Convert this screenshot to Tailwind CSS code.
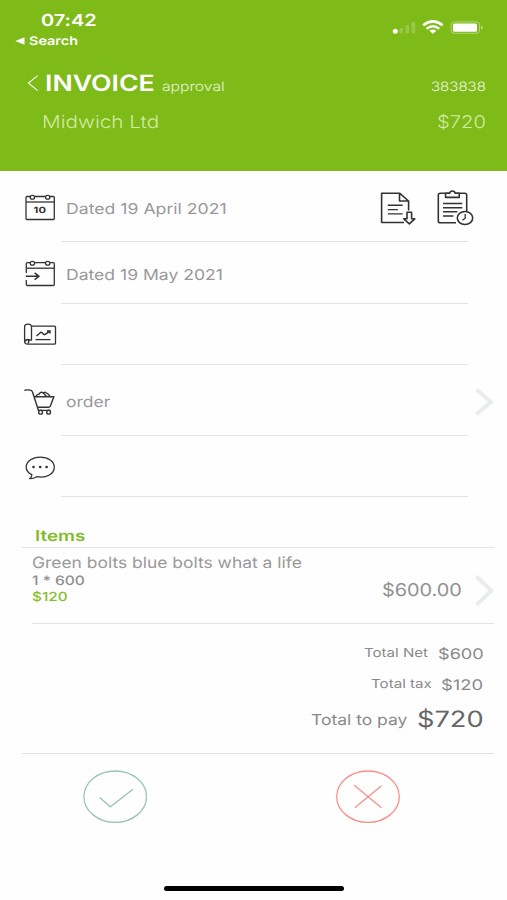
<!DOCTYPE html>
<html lang="en">
<head>
<meta charset="utf-8">
<meta name="viewport" content="width=device-width, initial-scale=1">
<title>Invoice approval</title>
<script src="https://cdn.jsdelivr.net/npm/@tailwindcss/browser@4"></script>
</head>
<body class="bg-white font-['Inter',sans-serif] whitespace-nowrap [text-rendering:geometricPrecision] [font-feature-settings:'calt'_0]">
<div class="w-[507px] h-[900px] flex flex-col overflow-hidden bg-[#fefefe]">

  <!-- Status bar and title -->
  <header class="h-[171px] shrink-0 bg-[#7eba18] text-white">
    <div class="flex h-[52px] justify-between pt-[10px]">
      <div class="flex flex-col">
        <div class="pl-[41px] h-5 leading-5 text-[16.5px] font-semibold"><span class="block w-[46px] origin-left scale-x-[1.21]">07:42</span></div>
        <div class="flex items-center pl-[15px] h-[22px] leading-[22px] text-[12px] font-semibold">
          <svg class="w-[10px] h-[8px] mr-[4px]" viewBox="0 0 10 8"><path d="M.3 4 9.5.2v7.6z" fill="#fff"/></svg>
          <span class="block w-[41px] origin-left scale-x-[1.203]">Search</span>
        </div>
      </div>
      <svg class="w-[95px] h-[20px] mt-[7px] mr-[22px]" viewBox="390 17 95 20" fill="none">
        <circle cx="395.3" cy="31.3" r="2.5" fill="#fff"/>
        <g fill="#fff" fill-opacity=".22"><rect x="399.5" y="28" width="3.6" height="5.6" rx="1"/><rect x="405.5" y="25" width="3.6" height="8.6" rx="1"/><rect x="411.6" y="22" width="3.6" height="11.6" rx="1"/></g>
        <g stroke="#fff" stroke-width="2.5"><path d="M423.2 25.2Q432.9 17.6 442.6 25.2"/><path d="M426.6 28.8Q432.9 23.8 439.2 28.8"/></g>
        <path d="M429.4 30.8Q432.9 28.4 436.4 30.8L432.9 33.8Z" fill="#fff"/>
        <rect x="451.2" y="21.9" width="28.3" height="11.4" rx="3" stroke="#fff" stroke-opacity=".4"/>
        <rect x="453" y="23.5" width="24" height="8.2" rx="1.5" fill="#fff"/>
        <path d="M481 25.8q2 .4 2 1.8t-2 1.8z" fill="#fff" fill-opacity=".45"/>
      </svg>
    </div>
    <div class="flex h-[63px] items-center pl-[27px] pt-[1px]">
      <svg class="w-[12px] h-[16px] mr-[5.8px] mb-[2px]" viewBox="27 74 12 16" fill="none"><path d="M37.7 74.6 28.4 82 37.7 89.6" stroke="#fff" stroke-opacity=".9" stroke-width="1.2"/></svg>
      <h1 class="w-[117.2px] text-[22.5px] font-semibold leading-8"><span class="block w-[93px] origin-left scale-x-[1.185]">INVOICE</span></h1>
      <div class="w-[268.6px] pt-[6px] text-[13px] font-light leading-5 text-white/80"><span class="block w-[52px] origin-left scale-x-[1.205]">approval</span></div>
      <div class="pt-[6px] text-[13px] font-light leading-5 text-white/85"><span class="block w-[48px] origin-left scale-x-[1.155]">383838</span></div>
    </div>
    <div class="flex h-[15px] items-center pl-[41.8px] text-[17.5px] font-light leading-6 text-[#d2eaa4]">
      <div class="w-[395.6px]"><span class="block w-[99px] origin-left scale-x-[1.185]">Midwich Ltd</span></div>
      <div><span class="block w-[43px] origin-left scale-x-[1.155]">$720</span></div>
    </div>
  </header>

  <!-- Invoice details -->
  <section class="w-[468px] shrink-0 text-[15px] leading-6 text-[#999]">
    <div class="flex h-[71px]">
      <div class="w-[61px] pl-[22px] pt-[21px]">
        <svg class="w-[36px] h-[30px]" viewBox="22 192 36 30" fill="none" stroke="#333" stroke-width="1.3">
          <rect x="26" y="196.5" width="28.3" height="23" rx="1"/><path d="M26 202h28.3"/>
          <g fill="#fff"><ellipse cx="32.4" cy="197.3" rx="2.2" ry="1.9"/><ellipse cx="47.7" cy="197.3" rx="2.2" ry="1.9"/></g>
          <text x="33.6" y="213.2" transform="translate(33.6 0) scale(1.312 1) translate(-33.6 0)" font-family="Inter" font-size="8.5" font-weight="700" fill="#333" stroke="none">10</text>
        </svg>
      </div>
      <div class="flex grow justify-between border-b border-[#e3e3e3] pl-[4.5px]">
        <div class="pt-[25.5px]"><span class="block w-[137px] origin-left scale-x-[1.177]">Dated 19 April 2021</span></div>
        <svg class="w-[96px] h-[38px] mt-[18px] -mr-[6px]" viewBox="378 189 96 38" fill="none" stroke="#333" stroke-width="1.6" stroke-linejoin="round">
          <path d="M404 222.5H381.6V193.2H399.5L408.6 201V210.5M399.5 193.2V201H408.6"/>
          <path d="M387.8 205.3H402.6M387.8 209.6H397.8M387.8 213.9H402.6" stroke-width="1.4"/>
          <path d="M407 212.2h4.6v6.6h3.2l-5.5 5-5.5-5h3.2z" fill="#fff"/>
          <path d="M456 222.8H440.3Q438.3 222.8 438.3 221V195Q438.3 193.3 440.3 193.3H464.7Q466.7 193.3 466.7 195V211"/>
          <path d="M445.6 193.3V197.4H459.2V193.3H455.2Q454.8 191 452.4 191T449.6 193.3Z" fill="#fff"/>
          <path d="M443 203.5H462.3M443 207.7H462.3M443 211.8H457.3M443 216H453.5" stroke-width="1.4"/>
          <ellipse cx="465" cy="218" rx="7.7" ry="6.5" fill="#fff"/><path d="M465.2 214v4.2l-2.8 2" stroke-width="1.3"/>
        </svg>
      </div>
    </div>

    <div class="flex h-[62px]">
      <div class="w-[61px] pl-[22px] pt-[16px]">
        <svg class="w-[36px] h-[30px]" viewBox="22 258 36 30" fill="none" stroke="#333" stroke-width="1.3">
          <path d="M26.3 273V263.5Q26.3 262.6 27.5 262.6H53.3Q54.3 262.6 54.3 263.5V284.6Q54.3 285.5 53.3 285.5H27.5Q26.3 285.5 26.3 284.6V280"/><path d="M26.3 268.2H54.3"/>
          <g fill="#fff"><ellipse cx="32.4" cy="263.3" rx="2.2" ry="1.9"/><ellipse cx="47.7" cy="263.3" rx="2.2" ry="1.9"/></g>
          <path d="M25.8 276.3H38.8M34.6 272.9 38.9 276.3 34.6 279.7" stroke-width="1.5"/>
        </svg>
      </div>
      <div class="grow border-b border-[#e3e3e3] pl-[4.5px] pt-[20.5px]"><span class="block w-[134px] origin-left scale-x-[1.17]">Dated 19 May 2021</span></div>
    </div>

    <div class="flex h-[61px]">
      <div class="w-[61px] pl-[22px] pt-[16px]">
        <svg class="w-[36px] h-[28px]" viewBox="22 320 36 28" fill="none" stroke="#333" stroke-width="1.3">
          <path d="M31.5 326.2H54.4Q55.5 326.2 55.5 327.2V343Q55.5 344.2 54.4 344.2H28Q24.6 344.2 24.6 341V327Q24.6 324.2 28 324.2T31.5 327V340.5"/>
          <path d="M24.8 341.5Q25.4 339.5 28 339.5L31.5 340.3M28 339.5Q29.8 341.8 27.7 343.6"/>
          <path d="M36.5 336 40.5 332.5Q41.3 332 42 332.7L43.6 334.3Q44.4 335 45.2 334.3L49.5 331.3M47 331H50V333.4" stroke-width="1.5"/><path d="M35.5 339.6H50.5"/>
        </svg>
      </div>
      <div class="grow border-b border-[#e3e3e3]"></div>
    </div>

    <div class="flex h-[71px]">
      <div class="w-[61px] shrink-0 pl-[22px] pt-[21px]">
        <svg class="w-[36px] h-[32px]" viewBox="22 386 36 32" fill="none" stroke="#333" stroke-width="1.4" stroke-linejoin="round">
          <path d="M24.5 390.8Q25 389.8 27 389.9L30.4 390.1Q32 390.3 32.5 392L38.5 410.5M34 396.8H53.9L50.3 406.2Q49.9 407.2 48.6 407.2H37.5M38.3 410.4H50.5"/>
          <path d="M36 396.4Q37.2 393.8 39.2 394.2Q40.6 391.6 42.8 392.6L46.6 396.4M42.8 393.6Q44.6 391.6 46.2 392.8Q48.6 393.6 50 396.4" stroke-width="1.4"/>
          <g fill="#fff"><circle cx="40.6" cy="412.2" r="1.9"/><circle cx="48.6" cy="412.2" r="1.9"/></g>
        </svg>
      </div>
      <div class="flex w-[407px] shrink-0 border-b border-[#e3e3e3] pl-[4.7px]">
        <div class="w-[407px] shrink-0 pt-[25px]"><span class="block w-[38px] origin-left scale-x-[1.165]">order</span></div>
        <svg class="w-[22px] h-[32px] mt-[21px] shrink-0" viewBox="472 386 22 32" fill="none"><path d="M475.5 389.7 490 402 475.5 414.3" stroke="#e8ecec" stroke-width="4"/></svg>
      </div>
    </div>

    <div class="flex h-[61px]">
      <div class="w-[61px] pl-[22px] pt-[17px]">
        <svg class="w-[36px] h-[30px]" viewBox="22 453 36 30" fill="none" stroke="#333" stroke-width="1.3">
          <path d="M31.8 474.7Q32 477.2 29.6 478.7Q34 478.8 36.6 476.7C47 478.6 54.3 473.6 54.3 467C54.3 461.3 48.2 457.1 40.2 457.1S26.2 461.3 26.2 467Q26.2 471.9 31.8 474.7Z" stroke-linejoin="round"/>
          <g fill="#333" stroke="none"><circle cx="33.5" cy="467" r="1.35"/><circle cx="40.2" cy="467" r="1.35"/><circle cx="46.6" cy="467" r="1.35"/></g>
        </svg>
      </div>
      <div class="grow border-b border-[#e3e3e3]"></div>
    </div>
  </section>

  <!-- Line items -->
  <section class="ml-[22px] w-[472px] shrink-0">
    <h2 class="h-[51px] border-b border-[#e3e3e3] pl-[12.6px] pt-[28.5px] text-[15px] font-semibold leading-5 text-[#82bb2a]"><span class="block w-[41px] origin-left scale-x-[1.255]">Items</span></h2>
    <div class="ml-[10px] flex h-[76px] border-b border-[#e3e3e3]">
      <div class="w-[349.5px] pt-[5px]">
        <div class="h-5 leading-5 text-[15.5px] text-[#999]"><span class="-ml-[.5px] block w-[240px] origin-left scale-x-[1.125]">Green bolts blue bolts what a life</span></div>
        <div class="h-[15px] leading-[17px] text-[13px] font-medium text-[#8f8f8f]"><span class="block w-[45px] origin-left scale-x-[1.2]">1 * 600</span></div>
        <div class="h-[19px] leading-[20px] text-[12.5px] font-medium text-[#86be2e]"><span class="block w-[29px] origin-left scale-x-[1.23]">$120</span></div>
      </div>
      <div class="w-[90.5px] pt-[30.5px] text-[17.5px] leading-6 text-[#909090]"><span class="block w-[71px] origin-left scale-x-[1.135]">$600.00</span></div>
      <svg class="w-[22px] h-[34px] mt-[26px]" viewBox="472 574 22 34" fill="none"><path d="M476.5 576.5 491.5 590.7 476.5 604.8" stroke="#e8ecec" stroke-width="4"/></svg>
    </div>

    <div class="h-[130px] border-b border-[#e3e3e3] pt-[15px] text-[#8a8a8a]">
      <div class="flex h-8 pl-[341.9px]">
        <div class="w-[73.9px] text-[12.5px] leading-[29px]"><span class="block w-[53px] origin-left scale-x-[1.205]">Total Net</span></div>
        <div class="text-[14.5px] leading-8"><span class="block w-[37px] origin-left scale-x-[1.25]">$600</span></div>
      </div>
      <div class="flex h-[30px] pl-[348.9px]">
        <div class="w-[70.4px] text-[12.5px] leading-[28px]"><span class="block w-[50px] origin-left scale-x-[1.21]">Total tax</span></div>
        <div class="text-[14.5px] leading-[30px]"><span class="block w-[33px] origin-left scale-x-[1.27]">$120</span></div>
      </div>
      <div class="flex h-[38px] pl-[289.2px]">
        <div class="w-[105.8px] text-[15px] leading-[38px]"><span class="block w-[83px] origin-left scale-x-[1.165]">Total to pay</span></div>
        <div class="text-[22.5px] leading-[37px] text-[#666]"><span class="block w-[55px] origin-left scale-x-[1.21]">$720</span></div>
      </div>
    </div>
  </section>

  <!-- Approve / reject -->
  <footer class="flex grow flex-col items-center justify-between">
    <div class="flex w-full gap-[189px] pl-[83px] pt-[16px]">
      <svg class="w-[64px] h-[54px]" viewBox="83 770 64 54" fill="none" stroke="#9ac7b1" stroke-width="1.3"><ellipse cx="115.2" cy="796.7" rx="31.3" ry="25.7"/><path d="M99.8 797.5 110.3 806.8 133 789.2"/></svg>
      <svg class="w-[64px] h-[54px]" viewBox="336 770 64 54" fill="none" stroke="#f88f89" stroke-width="1.3"><ellipse cx="368" cy="796.7" rx="31.3" ry="25.7"/><path d="M354.2 785.3 381.5 807.8M381.5 785.8 354.8 807.8"/></svg>
    </div>
    <div class="mb-[9px] h-[5.5px] w-[180px] rounded-full bg-black"></div>
  </footer>
</div>
</body>
</html>
